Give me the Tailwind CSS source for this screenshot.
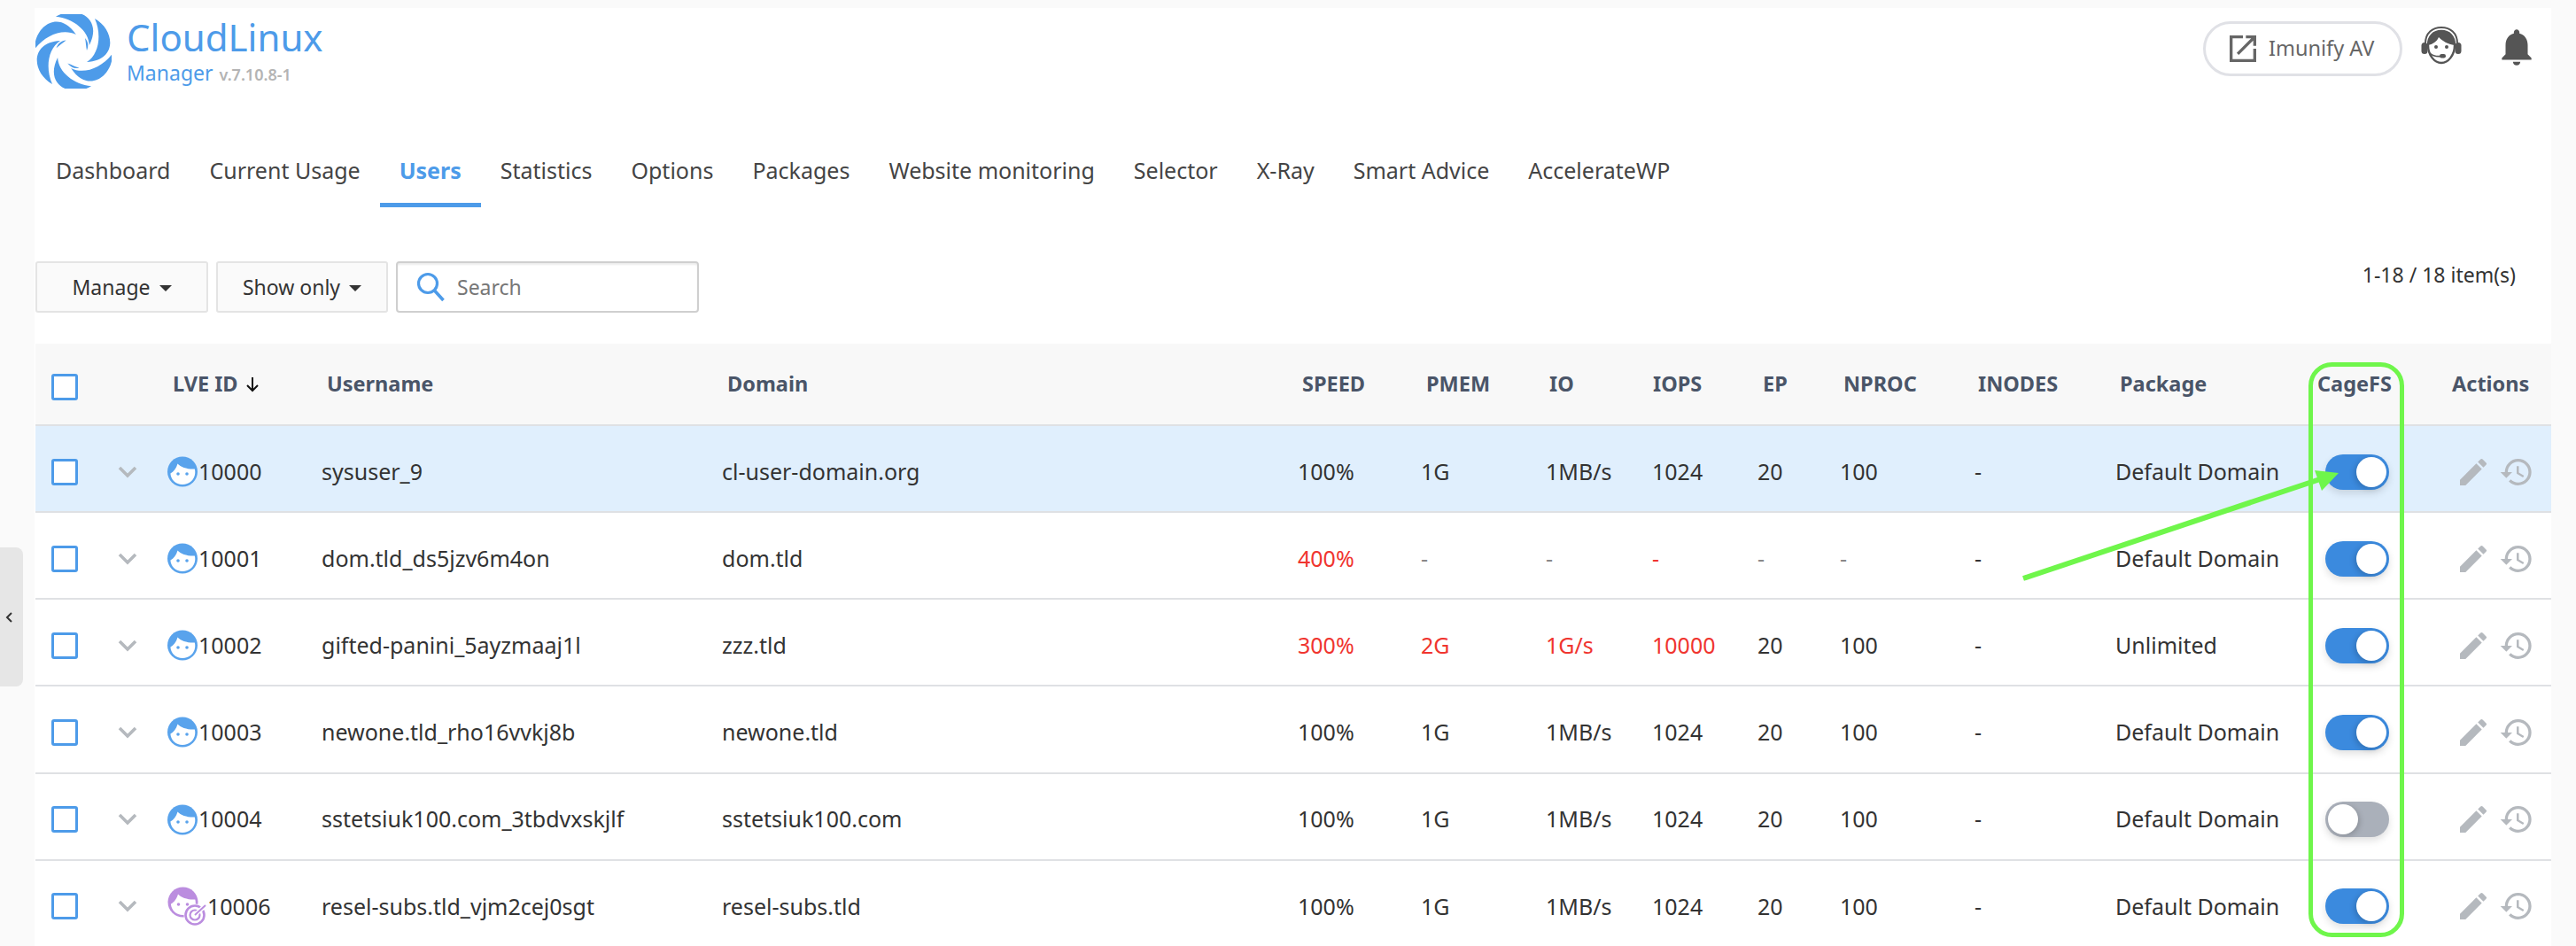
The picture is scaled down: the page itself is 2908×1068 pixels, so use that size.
<!DOCTYPE html>
<html lang="en">
<head>
  <meta charset="UTF-8">
  <title>CloudLinux Manager</title>
  <script src="https://cdn.jsdelivr.net/npm/@tailwindcss/browser@4"></script>
</head>
<body class="relative h-[1068px] w-[2908px] overflow-hidden bg-[#fafafa] font-['Noto_Sans',sans-serif] text-[25px] text-[#333]">
  <!-- shared icons -->
  <svg class="hidden">
    <symbol id="face" viewBox="0 0 34 35"><circle cx="17" cy="17.5" r="17" fill="currentColor"/><path d="M3.4 19.5C7 17.5 10 14 11.5 8.5C15 12.5 23 15 30.8 14.5C31.2 16 31.4 17.5 31.2 19.5C30.5 27 24.5 32 17 32C9.5 32 4 27 3.4 19.5Z" fill="#fff"/><circle cx="12" cy="20" r="1.8" fill="currentColor"/><circle cx="22" cy="20" r="1.8" fill="currentColor"/></symbol>
    <symbol id="edit" viewBox="0 0 24 24"><path d="M3 17.25V21h3.75L17.81 9.94l-3.75-3.75L3 17.25zM20.71 7.04a1 1 0 0 0 0-1.41l-2.34-2.34a1 1 0 0 0-1.41 0l-1.83 1.83 3.75 3.75 1.83-1.83z" fill="currentColor"/></symbol>
    <symbol id="history" viewBox="0 0 24 24"><path d="M13 3a9 9 0 0 0-9 9H1l3.89 3.89.07.14L9 12H6c0-3.87 3.13-7 7-7s7 3.13 7 7-3.13 7-7 7c-1.93 0-3.68-.79-4.94-2.06l-1.42 1.42A8.954 8.954 0 0 0 13 21a9 9 0 0 0 0-18zm-1 5v5l4.28 2.54.72-1.21-3.5-2.08V8H12z" fill="currentColor"/></symbol>
    <symbol id="chev" viewBox="0 0 22 14"><path d="M2 2l9 9 9-9" fill="none" stroke="currentColor" stroke-width="3.6"/></symbol>
  </svg>

  <aside class="absolute left-0 top-[618px] flex h-[157px] w-[26px] items-center rounded-r-lg bg-[#e6e6e6] pl-[5px]">
    <svg class="h-[14px] w-[10px] text-[#333]" viewBox="0 0 10 14"><path d="M8 2L3 7l5 5" fill="none" stroke="currentColor" stroke-width="2"/></svg>
  </aside>

  <main class="ml-[39px] mt-[9px] h-[1059px] w-[2841px] overflow-hidden bg-white">
    <header class="flex h-[161px] items-start justify-between">
      <div class="flex">
        <svg class="ml-px mt-[7px] h-[84px] w-[86px] text-[#4d9be9]" viewBox="-43 -42 86 84">
          <g fill="currentColor">
            <path d="M24-37C47-24 50 10 15 12C29 3 32-19 24-37Z"/>
            <path d="M24-37C47-24 50 10 15 12C29 3 32-19 24-37Z" transform="rotate(60)"/>
            <path d="M24-37C47-24 50 10 15 12C29 3 32-19 24-37Z" transform="rotate(120)"/>
            <path d="M24-37C47-24 50 10 15 12C29 3 32-19 24-37Z" transform="rotate(180)"/>
            <path d="M24-37C47-24 50 10 15 12C29 3 32-19 24-37Z" transform="rotate(240)"/>
            <path d="M24-37C47-24 50 10 15 12C29 3 32-19 24-37Z" transform="rotate(300)"/>
            <path d="M13-15C17-10 17-6 15-1C14-6 14-10 13-15Z"/>
            <path d="M13-15C17-10 17-6 15-1C14-6 14-10 13-15Z" transform="rotate(120)"/>
            <path d="M13-15C17-10 17-6 15-1C14-6 14-10 13-15Z" transform="rotate(240)"/>
          </g>
        </svg>
        <div class="ml-[17px] mt-[3px] text-[#4d9be9]">
          <div class="text-[42px] leading-[60px]">CloudLinux</div>
          <div class="-mt-[5px] flex items-baseline gap-[7px] text-[23px] leading-[30px]">Manager <span class="text-[18px] font-semibold text-[#b4b4b4]">v.7.10.8-1</span></div>
        </div>
      </div>
      <div class="mr-[14px] mt-[15px] flex items-start">
        <a class="flex h-[62px] w-[225px] items-center gap-[9px] rounded-full border-[3px] border-[#e0e1e6] pl-[27px] text-[23.5px] text-[#666]">
          <svg class="-ml-[5px] h-[40px] w-[40px] shrink-0" viewBox="0 0 24 24"><path d="M19 19H5V5h7V3H3v18h18v-9h-2v7zM14 3v2h3.59l-9.83 9.83 1.41 1.41L19 6.41V10h2V3h-7z" fill="currentColor"/></svg>
          <span>Imunify AV</span>
        </a>
        <svg class="ml-[21px] mt-[5px] h-[44px] w-[46px] text-[#555]" viewBox="0 0 46 44">
          <path d="M5 20C5 8 13 2 23 2s18 6 18 18" fill="none" stroke="currentColor" stroke-width="2"/>
          <rect x="0.5" y="19" width="7" height="13" rx="3.5" fill="currentColor"/><rect x="38.5" y="19" width="7" height="13" rx="3.5" fill="currentColor"/>
          <path d="M8 22C8 33 15 42 23 42s15-9 15-20C38 12 32 6 23 6S8 12 8 22Z" fill="#fff" stroke="currentColor" stroke-width="2.4"/>
          <path d="M8 22C8 12 14 6 23 6s15 6 15 16C30 21 24 17 20 13C18 18 13 21 8 22Z" fill="currentColor"/>
          <circle cx="17" cy="24" r="2" fill="currentColor"/><circle cx="29" cy="24" r="2" fill="currentColor"/>
          <path d="M10 31c3 3 8 4 13 3.500" fill="none" stroke="currentColor" stroke-width="1.6"/><rect x="21" y="32" width="7" height="4.500" rx="2.200" fill="currentColor"/>
        </svg>
        <svg class="ml-[37px] mt-[4px] h-[50px] w-[50px] text-[#555]" viewBox="0 0 24 24"><path d="M12 22c1.100 0 2-.9 2-2h-4c0 1.100.89 2 2 2zm6-6v-5c0-3.070-1.640-5.640-4.500-6.320V4c0-.83-.67-1.500-1.500-1.500s-1.500.67-1.500 1.500v.68C7.630 5.360 6 7.920 6 11v5l-2 2v1h16v-1l-2-2z" fill="currentColor"/></svg>
      </div>
    </header>

    <nav class="ml-[2px] flex h-[64px] text-[#444]">
      <a class="h-full px-[22px] pt-[4px]">Dashboard</a>
      <a class="h-full px-[22px] pt-[4px]">Current Usage</a>
      <a class="h-full border-b-[5px] border-[#4d9be9] px-[22px] pt-[4px] font-bold text-[#4d9be9]">Users</a>
      <a class="h-full px-[22px] pt-[4px]">Statistics</a>
      <a class="h-full px-[22px] pt-[4px]">Options</a>
      <a class="h-full px-[22px] pt-[4px]">Packages</a>
      <a class="h-full px-[22px] pt-[4px]">Website monitoring</a>
      <a class="h-full px-[22px] pt-[4px]">Selector</a>
      <a class="h-full px-[22px] pt-[4px]">X-Ray</a>
      <a class="h-full px-[22px] pt-[4px]">Smart Advice</a>
      <a class="h-full px-[22px] pt-[4px]">AccelerateWP</a>
    </nav>

    <div class="mt-[61px] flex h-[93px] items-start pl-px">
      <button class="flex h-[58px] w-[195px] items-center justify-center gap-[10px] rounded-[3px] border-2 border-[#e4e4e4] bg-[#fafafa] text-[23px]">Manage <span class="mt-[3px] border-x-[7px] border-t-[7px] border-x-transparent border-t-[#333]"></span></button>
      <button class="ml-[9px] flex h-[58px] w-[194px] items-center justify-center gap-[10px] rounded-[3px] border-2 border-[#e4e4e4] bg-[#fafafa] text-[23px]">Show only <span class="mt-[3px] border-x-[7px] border-t-[7px] border-x-transparent border-t-[#333]"></span></button>
      <div class="ml-[9px] flex h-[58px] w-[342px] items-center rounded-[4px] border-2 border-[#cfcfcf] pl-[21px] text-[23px] text-[#777] shadow-[inset_0_2px_2px_rgba(0,0,0,0.08)]">
        <svg class="h-[34px] w-[34px] text-[#4d9be9]" viewBox="0 0 34 34"><circle cx="13" cy="13" r="10.500" fill="none" stroke="currentColor" stroke-width="3.200"/><path d="M20.500 21l10 11" stroke="currentColor" stroke-width="3.600"/></svg>
        <span class="ml-[12px]">Search</span>
      </div>
      <div class="ml-auto mr-[40px] mt-[-2px] text-[23px]">1-18 / 18 item(s)</div>
    </div>

    <section class="ml-px">
      <div class="grid h-[93px] grid-cols-[93px_56px_174px_452px_650px_139px_141px_120px_119px_93px_152px_159px_237px_143px_112px] items-center border-b-2 border-[#dfe1e4] bg-[#f8f8f8] text-[23.5px] font-bold text-[#4a5568]">
        <div class="pl-[18px]"><div class="mt-[6px] h-[30px] w-[30px] rounded-[3px] border-[3px] border-[#4d9be9] bg-white"></div></div>
        <div></div>
        <div class="flex items-center gap-[8px] pl-[6px]">LVE ID <svg class="h-[20px] w-[16px] text-[#111]" viewBox="0 0 16 20"><path d="M8 2v15M2 11l6 6 6-6" fill="none" stroke="currentColor" stroke-width="2"/></svg></div>
        <div class="pl-[6px]">Username</div>
        <div class="pl-[6px]">Domain</div>
        <div class="pl-[5px]">SPEED</div>
        <div class="pl-[6px]">PMEM</div>
        <div class="pl-[4px]">IO</div>
        <div class="pl-[1px]">IOPS</div>
        <div class="pl-[6px]">EP</div>
        <div class="pl-[4px]">NPROC</div>
        <div class="pl-[4px]">INODES</div>
        <div class="pl-[5px]">Package</div>
        <div class="-ml-[9px]">CageFS</div>
        <div>Actions</div>
      </div>

      <div class="grid h-[98px] grid-cols-[93px_56px_174px_452px_650px_139px_141px_120px_119px_93px_152px_159px_237px_143px_112px] items-center border-b-2 border-[#dfe1e4] bg-[#e0effd] pt-[7px]">
        <div class="pl-[18px]"><div class="h-[30px] w-[30px] rounded-[3px] border-[3px] border-[#4d9be9] bg-white"></div></div>
        <svg class="h-[14px] w-[22px] text-[#b5b9be]"><use href="#chev"/></svg>
        <div class="flex items-center gap-[1px]"><svg class="h-[35px] w-[34px] text-[#59a3ec]"><use href="#face"/></svg>10000</div>
        <div>sysuser_9</div>
        <div>cl-user-domain.org</div>
        <div>100%</div><div>1G</div><div>1MB/s</div><div>1024</div><div>20</div><div>100</div><div>-</div><div>Default Domain</div>
        <div class="relative h-[40px] w-[72px] rounded-full bg-[#3b8ade] shadow-[0_4px_8px_rgba(0,0,0,0.12)]"><span class="absolute right-[3px] top-[3px] h-[34px] w-[34px] rounded-full bg-white shadow-[-2px_2px_6px_rgba(0,0,0,0.18)]"></span></div>
        <div class="flex gap-[9px] pl-[4px] text-[#b5b9be]"><svg class="h-[40px] w-[40px]"><use href="#edit"/></svg><svg class="h-[40px] w-[40px]"><use href="#history"/></svg></div>
      </div>

      <div class="grid h-[98.2px] grid-cols-[93px_56px_174px_452px_650px_139px_141px_120px_119px_93px_152px_159px_237px_143px_112px] items-center border-b-2 border-[#dfe1e4] pt-[7px]">
        <div class="pl-[18px]"><div class="h-[30px] w-[30px] rounded-[3px] border-[3px] border-[#4d9be9] bg-white"></div></div>
        <svg class="h-[14px] w-[22px] text-[#b5b9be]"><use href="#chev"/></svg>
        <div class="flex items-center gap-[1px]"><svg class="h-[35px] w-[34px] text-[#59a3ec]"><use href="#face"/></svg>10001</div>
        <div>dom.tld_ds5jzv6m4on</div>
        <div>dom.tld</div>
        <div class="text-[#f0352f]">400%</div><div class="text-[#888]">-</div><div class="text-[#888]">-</div><div class="text-[#f0352f]">-</div><div class="text-[#888]">-</div><div class="text-[#888]">-</div><div>-</div><div>Default Domain</div>
        <div class="relative h-[40px] w-[72px] rounded-full bg-[#3b8ade] shadow-[0_4px_8px_rgba(0,0,0,0.12)]"><span class="absolute right-[3px] top-[3px] h-[34px] w-[34px] rounded-full bg-white shadow-[-2px_2px_6px_rgba(0,0,0,0.18)]"></span></div>
        <div class="flex gap-[9px] pl-[4px] text-[#b5b9be]"><svg class="h-[40px] w-[40px]"><use href="#edit"/></svg><svg class="h-[40px] w-[40px]"><use href="#history"/></svg></div>
      </div>

      <div class="grid h-[98.2px] grid-cols-[93px_56px_174px_452px_650px_139px_141px_120px_119px_93px_152px_159px_237px_143px_112px] items-center border-b-2 border-[#dfe1e4] pt-[7px]">
        <div class="pl-[18px]"><div class="h-[30px] w-[30px] rounded-[3px] border-[3px] border-[#4d9be9] bg-white"></div></div>
        <svg class="h-[14px] w-[22px] text-[#b5b9be]"><use href="#chev"/></svg>
        <div class="flex items-center gap-[1px]"><svg class="h-[35px] w-[34px] text-[#59a3ec]"><use href="#face"/></svg>10002</div>
        <div>gifted-panini_5ayzmaaj1l</div>
        <div>zzz.tld</div>
        <div class="text-[#f0352f]">300%</div><div class="text-[#f0352f]">2G</div><div class="text-[#f0352f]">1G/s</div><div class="text-[#f0352f]">10000</div><div>20</div><div>100</div><div>-</div><div>Unlimited</div>
        <div class="relative h-[40px] w-[72px] rounded-full bg-[#3b8ade] shadow-[0_4px_8px_rgba(0,0,0,0.12)]"><span class="absolute right-[3px] top-[3px] h-[34px] w-[34px] rounded-full bg-white shadow-[-2px_2px_6px_rgba(0,0,0,0.18)]"></span></div>
        <div class="flex gap-[9px] pl-[4px] text-[#b5b9be]"><svg class="h-[40px] w-[40px]"><use href="#edit"/></svg><svg class="h-[40px] w-[40px]"><use href="#history"/></svg></div>
      </div>

      <div class="grid h-[98.2px] grid-cols-[93px_56px_174px_452px_650px_139px_141px_120px_119px_93px_152px_159px_237px_143px_112px] items-center border-b-2 border-[#dfe1e4] pt-[7px]">
        <div class="pl-[18px]"><div class="h-[30px] w-[30px] rounded-[3px] border-[3px] border-[#4d9be9] bg-white"></div></div>
        <svg class="h-[14px] w-[22px] text-[#b5b9be]"><use href="#chev"/></svg>
        <div class="flex items-center gap-[1px]"><svg class="h-[35px] w-[34px] text-[#59a3ec]"><use href="#face"/></svg>10003</div>
        <div>newone.tld_rho16vvkj8b</div>
        <div>newone.tld</div>
        <div>100%</div><div>1G</div><div>1MB/s</div><div>1024</div><div>20</div><div>100</div><div>-</div><div>Default Domain</div>
        <div class="relative h-[40px] w-[72px] rounded-full bg-[#3b8ade] shadow-[0_4px_8px_rgba(0,0,0,0.12)]"><span class="absolute right-[3px] top-[3px] h-[34px] w-[34px] rounded-full bg-white shadow-[-2px_2px_6px_rgba(0,0,0,0.18)]"></span></div>
        <div class="flex gap-[9px] pl-[4px] text-[#b5b9be]"><svg class="h-[40px] w-[40px]"><use href="#edit"/></svg><svg class="h-[40px] w-[40px]"><use href="#history"/></svg></div>
      </div>

      <div class="grid h-[98.2px] grid-cols-[93px_56px_174px_452px_650px_139px_141px_120px_119px_93px_152px_159px_237px_143px_112px] items-center border-b-2 border-[#dfe1e4] pt-[7px]">
        <div class="pl-[18px]"><div class="h-[30px] w-[30px] rounded-[3px] border-[3px] border-[#4d9be9] bg-white"></div></div>
        <svg class="h-[14px] w-[22px] text-[#b5b9be]"><use href="#chev"/></svg>
        <div class="flex items-center gap-[1px]"><svg class="h-[35px] w-[34px] text-[#59a3ec]"><use href="#face"/></svg>10004</div>
        <div>sstetsiuk100.com_3tbdvxskjlf</div>
        <div>sstetsiuk100.com</div>
        <div>100%</div><div>1G</div><div>1MB/s</div><div>1024</div><div>20</div><div>100</div><div>-</div><div>Default Domain</div>
        <div class="relative h-[40px] w-[72px] rounded-full bg-[#aab0ba] shadow-[0_4px_8px_rgba(0,0,0,0.12)]"><span class="absolute left-[3px] top-[3px] h-[34px] w-[34px] rounded-full bg-white shadow-[2px_2px_6px_rgba(0,0,0,0.18)]"></span></div>
        <div class="flex gap-[9px] pl-[4px] text-[#b5b9be]"><svg class="h-[40px] w-[40px]"><use href="#edit"/></svg><svg class="h-[40px] w-[40px]"><use href="#history"/></svg></div>
      </div>

      <div class="grid h-[98.2px] grid-cols-[93px_56px_174px_452px_650px_139px_141px_120px_119px_93px_152px_159px_237px_143px_112px] items-center border-b-2 border-[#dfe1e4] pt-[7px]">
        <div class="pl-[18px]"><div class="h-[30px] w-[30px] rounded-[3px] border-[3px] border-[#4d9be9] bg-white"></div></div>
        <svg class="h-[14px] w-[22px] text-[#b5b9be]"><use href="#chev"/></svg>
        <div class="flex items-center gap-[1px]">
          <svg class="h-[44px] w-[44px] text-[#bb8ddf]" viewBox="0 0 44 44">
            <use href="#face" width="35" height="35" y="0"/>
            <circle cx="31" cy="32" r="12.500" fill="#fff"/><circle cx="31" cy="32" r="10.500" fill="none" stroke="currentColor" stroke-width="2.600"/><circle cx="31" cy="32" r="5.500" fill="none" stroke="currentColor" stroke-width="2.200"/><path d="M31 32L43 21" stroke="#fff" stroke-width="5"/><path d="M31 32L43 21" stroke="currentColor" stroke-width="2"/>
          </svg>10006</div>
        <div>resel-subs.tld_vjm2cej0sgt</div>
        <div>resel-subs.tld</div>
        <div>100%</div><div>1G</div><div>1MB/s</div><div>1024</div><div>20</div><div>100</div><div>-</div><div>Default Domain</div>
        <div class="relative h-[40px] w-[72px] rounded-full bg-[#3b8ade] shadow-[0_4px_8px_rgba(0,0,0,0.12)]"><span class="absolute right-[3px] top-[3px] h-[34px] w-[34px] rounded-full bg-white shadow-[-2px_2px_6px_rgba(0,0,0,0.18)]"></span></div>
        <div class="flex gap-[9px] pl-[4px] text-[#b5b9be]"><svg class="h-[40px] w-[40px]"><use href="#edit"/></svg><svg class="h-[40px] w-[40px]"><use href="#history"/></svg></div>
      </div>
    </section>
  </main>

  <!-- green annotation drawn over the screenshot -->
  <svg class="pointer-events-none absolute inset-0 h-[1068px] w-[2908px]" viewBox="0 0 2908 1068">
    <rect x="2608.500" y="411.500" width="103" height="644" rx="24" fill="none" stroke="#6ff64b" stroke-width="5"/>
    <path d="M2284 653L2622 540" stroke="#6ff64b" stroke-width="6"/>
    <path d="M2640 534L2613 531L2621 554Z" fill="#6ff64b"/>
  </svg>
</body>
</html>
